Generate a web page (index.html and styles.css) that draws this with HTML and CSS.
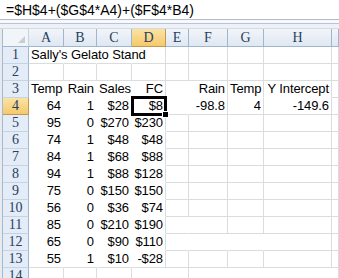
FILE: index.html
```html
<!DOCTYPE html>
<html lang="en">
<head>
  <meta charset="UTF-8">
  <title>Sally's Gelato Stand</title>
  <link rel="stylesheet" href="styles.css">
</head>
<body>
  <div class="fx">=$H$4+($G$4*A4)+($F$4*B4)</div>
  <div class="band"></div>

  <div class="sheet">
    <div class="row hdr">
      <div class="corner"><span class="tri"></span></div>
      <div class="ch">A</div><div class="ch">B</div><div class="ch">C</div><div class="ch sel">D</div>
      <div class="ch">E</div><div class="ch">F</div><div class="ch">G</div><div class="ch">H</div><div class="ch"></div>
    </div>

    <div class="row">
      <div class="rh">1</div>
      <div class="c nr"><span class="ovf">Sally's Gelato Stand</span></div><div class="c nr"></div><div class="c nr"></div><div class="c"></div>
      <div class="c"></div><div class="c"></div><div class="c"></div><div class="c"></div><div class="c"></div>
    </div>
    <div class="row">
      <div class="rh">2</div>
      <div class="c"></div><div class="c"></div><div class="c"></div><div class="c"></div>
      <div class="c"></div><div class="c"></div><div class="c"></div><div class="c"></div><div class="c"></div>
    </div>
    <div class="row">
      <div class="rh">3</div>
      <div class="c n nr nb">Temp</div><div class="c n nr nb">Rain</div><div class="c n nr nb">Sales</div><div class="c n nb">FC</div>
      <div class="c nr nb"></div><div class="c n nb">Rain</div><div class="c n nb">Temp</div><div class="c n nb">Y Intercept</div><div class="c"></div>
    </div>
    <div class="row">
      <div class="rh sel">4</div>
      <div class="c n nr nb">64</div><div class="c n nr nb">1</div><div class="c n nr nb">$28</div><div class="c n nb cur">$8</div>
      <div class="c nr"></div><div class="c n">-98.8</div><div class="c n">4</div><div class="c n">-149.6</div><div class="c"></div>
    </div>
    <div class="row">
      <div class="rh">5</div>
      <div class="c n nr nb">95</div><div class="c n nr nb">0</div><div class="c n nr nb">$270</div><div class="c n nb">$230</div>
      <div class="c"></div><div class="c"></div><div class="c"></div><div class="c"></div><div class="c"></div>
    </div>
    <div class="row">
      <div class="rh">6</div>
      <div class="c n nr nb">74</div><div class="c n nr nb">1</div><div class="c n nr nb">$48</div><div class="c n nb">$48</div>
      <div class="c"></div><div class="c"></div><div class="c"></div><div class="c"></div><div class="c"></div>
    </div>
    <div class="row">
      <div class="rh">7</div>
      <div class="c n nr nb">84</div><div class="c n nr nb">1</div><div class="c n nr nb">$68</div><div class="c n nb">$88</div>
      <div class="c"></div><div class="c"></div><div class="c"></div><div class="c"></div><div class="c"></div>
    </div>
    <div class="row">
      <div class="rh">8</div>
      <div class="c n nr nb">94</div><div class="c n nr nb">1</div><div class="c n nr nb">$88</div><div class="c n nb">$128</div>
      <div class="c"></div><div class="c"></div><div class="c"></div><div class="c"></div><div class="c"></div>
    </div>
    <div class="row">
      <div class="rh">9</div>
      <div class="c n nr nb">75</div><div class="c n nr nb">0</div><div class="c n nr nb">$150</div><div class="c n nb">$150</div>
      <div class="c"></div><div class="c"></div><div class="c"></div><div class="c"></div><div class="c"></div>
    </div>
    <div class="row">
      <div class="rh">10</div>
      <div class="c n nr nb">56</div><div class="c n nr nb">0</div><div class="c n nr nb">$36</div><div class="c n nb">$74</div>
      <div class="c"></div><div class="c"></div><div class="c"></div><div class="c"></div><div class="c"></div>
    </div>
    <div class="row">
      <div class="rh">11</div>
      <div class="c n nr nb">85</div><div class="c n nr nb">0</div><div class="c n nr nb">$210</div><div class="c n nb">$190</div>
      <div class="c nr"></div><div class="c"></div><div class="c"></div><div class="c"></div><div class="c"></div>
    </div>
    <div class="row">
      <div class="rh">12</div>
      <div class="c n nr nb">65</div><div class="c n nr nb">0</div><div class="c n nr nb">$90</div><div class="c n nb">$110</div>
      <div class="c nr"></div><div class="c nr"></div><div class="c nr"></div><div class="c"></div><div class="c"></div>
    </div>
    <div class="row">
      <div class="rh">13</div>
      <div class="c n nr">55</div><div class="c n nr">1</div><div class="c n nr">$10</div><div class="c n">-$28</div>
      <div class="c"></div><div class="c"></div><div class="c"></div><div class="c"></div><div class="c"></div>
    </div>
    <div class="row">
      <div class="rh">14</div>
      <div class="c"></div><div class="c"></div><div class="c"></div><div class="c nr"></div>
      <div class="c"></div><div class="c nr"></div><div class="c nr"></div><div class="c nr"></div><div class="c"></div>
    </div>
  </div>
</body>
</html>
```

FILE: styles.css
```css
:root {
  --grid: #dadcdd;
  --hdr-line: #9eb6ce;
  --hdr-text: #27415f;
}

* {
  margin: 0;
  padding: 0;
  box-sizing: border-box;
}

body {
  width: 339px;
  height: 278px;
  overflow: hidden;
  background: #fff;
  font-family: "Liberation Sans", Arial, sans-serif;
  color: #000;
}

.fx {
  height: 20px;
  padding: 2px 0 0 6px;
  font-size: 14px;
  line-height: 17px;
  border-bottom: 1px solid #b1bbc6;
  background: #fff;
}

.band {
  height: 9px;
  background: #eef1f6;
  border-top: 3px solid #f6f8fb;
  border-bottom: 1px solid #d2dae4;
  box-shadow: inset 0 1px 0 #b8c5d6;
}

.sheet {
  padding-left: 3px;
  background: linear-gradient(to right, #e6ebf2 2px, #a9b9cc 2px 3px, transparent 3px);
}

.row {
  display: grid;
  grid-template-columns: 26px 35px 33px 35px 34px 23px 39px 36px 68px 1fr;
  height: 17px;
}

.row.hdr {
  height: 18px;
}

.corner,
.ch,
.rh {
  font-family: "Liberation Serif", "DejaVu Serif", serif;
  color: var(--hdr-text);
  font-size: 14px;
  text-align: center;
  border-right: 1px solid var(--hdr-line);
  border-bottom: 1px solid var(--hdr-line);
}

.corner {
  position: relative;
  background: #f1f4f8;
  border-right-color: #c6d2df;
}

.tri {
  position: absolute;
  right: 3px;
  bottom: 3px;
  width: 0;
  height: 0;
  border-left: 7px solid transparent;
  border-bottom: 7px solid #c8ced6;
}

.ch {
  line-height: 17px;
  background: linear-gradient(#f2f5fa, #dfe7f2);
}

.rh {
  line-height: 16px;
  background: #e4ecf7;
  border-bottom-color: #c6d3e2;
}

.ch.sel {
  background: linear-gradient(#fbe3a4, #f5c96c);
  border-right-color: #c29a4f;
  border-bottom-color: #c29a4f;
}

.rh.sel {
  background: linear-gradient(#fbe3a4, #f5c96c);
  border-bottom-color: #c29a4f;
  border-right-color: #c29a4f;
}

.c {
  position: relative;
  font-size: 13px;
  letter-spacing: -0.1px;
  line-height: 16px;
  padding: 0 2px 0 2px;
  white-space: nowrap;
  border-right: 1px solid var(--grid);
  border-bottom: 1px solid var(--grid);
}

.c.n {
  text-align: right;
}

.c.nr {
  border-right-color: transparent;
}

.c.nb {
  border-bottom-color: transparent;
}

.ovf {
  position: relative;
  z-index: 1;
}

.cur::after {
  content: '';
  position: absolute;
  top: -2px;
  left: -1px;
  right: -2px;
  bottom: -2px;
  border: 3px solid #000;
}

.cur::before {
  content: '';
  position: absolute;
  right: -4px;
  bottom: -4px;
  width: 5px;
  height: 5px;
  background: #000;
  border: 1px solid #fff;
  z-index: 2;
}
```
